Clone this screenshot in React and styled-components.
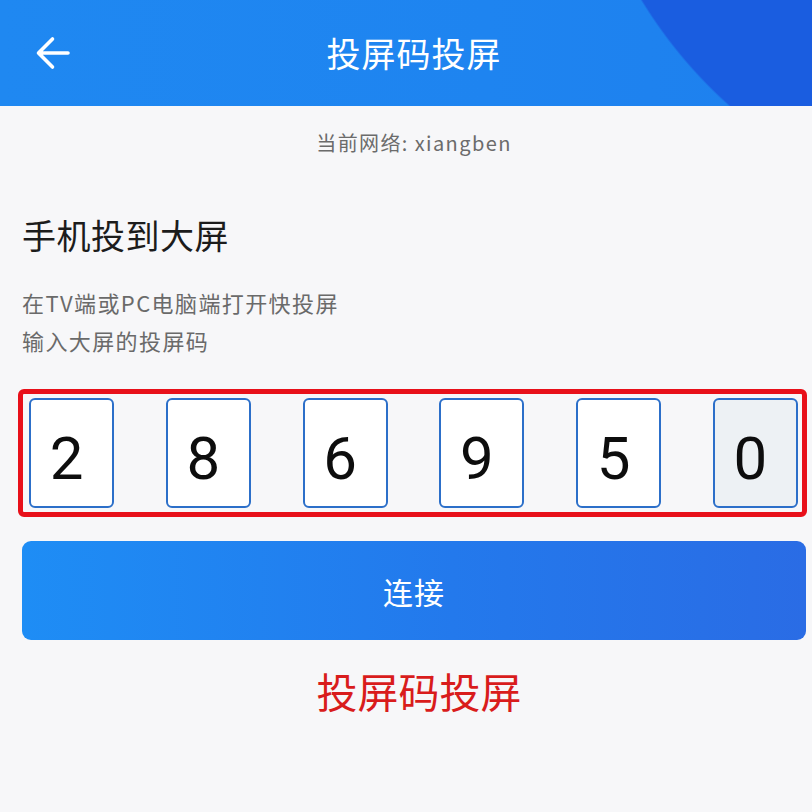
import React from "react";
import styled, { createGlobalStyle } from "styled-components";

const GlobalStyle = createGlobalStyle`
  html, body { margin: 0; padding: 0; background: #f7f7f9; }
  body { font-family: "Noto Sans CJK SC", "Noto Sans", sans-serif; }
  * { box-sizing: border-box; }
`;

const Page = styled.div`
  width: 812px;
  min-height: 812px;
  background: #f7f7f9;
  display: flex;
  flex-direction: column;
`;

const Header = styled.header`
  height: 106px;
  display: flex;
  align-items: center;
  padding: 0 6px 0 22px;
  position: relative;
  background:
    radial-gradient(circle 470px at 1042px -244px, #1a5de0 99.6%, rgba(26, 93, 224, 0) 100%),
    linear-gradient(90deg, #1f88f1 0%, #1e84f0 60%, #1e80ee 100%);
`;

const BackButton = styled.button`
  width: 62px;
  height: 62px;
  padding: 0;
  border: none;
  background: transparent;
  display: flex;
  align-items: center;
  justify-content: center;
  cursor: pointer;
  position: absolute;
  left: 22px;
  top: 22px;
`;

const Title = styled.h1`
  flex: 1;
  margin: 0;
  text-align: center;
  color: #ffffff;
  font-size: 34px;
  font-weight: 400;
  line-height: 40px;
  letter-spacing: 1px;
`;

const Body = styled.main`
  display: flex;
  flex-direction: column;
  padding: 23px 6px 0 22px;
`;

const Network = styled.div`
  text-align: center;
  color: #6b6b6b;
  font-size: 20px;
  line-height: 28px;
  letter-spacing: 1.4px;
`;

const Heading = styled.h2`
  margin: 58px 0 0;
  color: #1c1c1c;
  font-size: 34px;
  font-weight: 400;
  line-height: 40px;
  letter-spacing: 0.5px;
`;

const Desc = styled.p`
  margin: 28px 0 0;
  color: #6a6a6a;
  font-size: 22px;
  line-height: 38px;
  letter-spacing: 1.4px;
`;

const CodeFrame = styled.div`
  margin: 30px -1px 0 -4px;
  border: 5px solid #e8101a;
  border-radius: 6px;
  padding: 4px 4px 4px 6px;
  display: flex;
  justify-content: space-between;
`;

const DigitBox = styled.div`
  width: 85px;
  height: 110px;
  border: 2.5px solid #2c6fc9;
  border-radius: 6px;
  background: ${(p) => (p.$active ? "#edf1f4" : "#ffffff")};
  display: flex;
  align-items: center;
  justify-content: center;
  padding: 10px 10px 0 0;
  font-family: Roboto, "Liberation Sans", Arial, sans-serif;
  font-size: 60px;
  color: #0d0d0d;
`;

const ConnectButton = styled.button`
  margin-top: 24px;
  height: 99px;
  width: 100%;
  border: none;
  border-radius: 9px;
  background: linear-gradient(90deg, #1e8df5 0%, #2379ec 55%, #2a6ce5 100%);
  color: #ffffff;
  font-family: "Noto Sans CJK SC", sans-serif;
  font-size: 30px;
  letter-spacing: 1px;
  cursor: pointer;
`;

const Caption = styled.div`
  margin-top: 25px;
  text-align: center;
  padding-left: 10px;
  color: #d91c1c;
  font-size: 41px;
  font-weight: 400;
  line-height: 50px;
`;

const digits = ["2", "8", "6", "9", "5", "0"];

export default function App() {
  return (
    <>
      <GlobalStyle />
      <Page>
        <Header>
          <BackButton aria-label="返回">
            <svg width="36" height="36" viewBox="0 0 36 36" fill="none">
              <path
                d="M33 18 H4 M17.5 4 L3.5 18 L17.5 32"
                stroke="#ffffff"
                strokeWidth="3.6"
                strokeLinecap="round"
                strokeLinejoin="round"
              />
            </svg>
          </BackButton>
          <Title>投屏码投屏</Title>
        </Header>
        <Body>
          <Network>当前网络: xiangben</Network>
          <Heading>手机投到大屏</Heading>
          <Desc>
            在TV端或PC电脑端打开快投屏
            <br />
            输入大屏的投屏码
          </Desc>
          <CodeFrame>
            {digits.map((d, i) => (
              <DigitBox key={i} $active={i === digits.length - 1}>
                {d}
              </DigitBox>
            ))}
          </CodeFrame>
          <ConnectButton>连接</ConnectButton>
          <Caption>投屏码投屏</Caption>
        </Body>
      </Page>
    </>
  );
}
